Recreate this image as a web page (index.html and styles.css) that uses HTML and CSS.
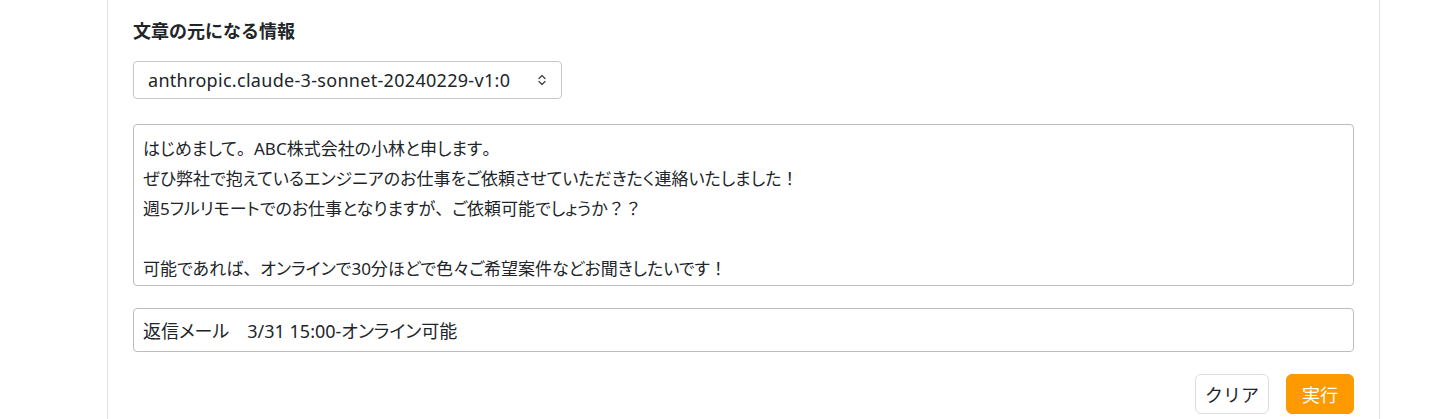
FILE: index.html
```html
<!DOCTYPE html>
<html lang="ja">
<head>
<meta charset="utf-8">
<link rel="stylesheet" href="styles.css">
</head>
<body>
<div class="page">
  <div class="card">
    <h2 class="title">文章の元になる情報</h2>
    <div class="select">
      <span class="select-text">anthropic.claude-3-sonnet-20240229-v1:0</span>
      <svg class="chev" width="10" height="16" viewBox="0 0 10 16" fill="none" stroke="#444" stroke-width="1.3" stroke-linecap="round" stroke-linejoin="round"><path d="M2 6.5 L5 3.5 L8 6.5"/><path d="M2 9.5 L5 12.5 L8 9.5"/></svg>
    </div>
    <div class="textarea">はじめまして<span class="fw">。</span>ABC株式会社の小林と申します<span class="fw">。</span><br>ぜひ弊社で抱えているエンジニアのお仕事をご依頼させていただきたく連絡いたしました<span class="fw">！</span><br>週5フルリモートでのお仕事となりますが<span class="fw">、</span>ご依頼可能でしょうか<span class="fw">？？</span><br><br>可能であれば<span class="fw">、</span>オンラインで30分ほどで色々ご希望案件などお聞きしたいです<span class="fw">！</span></div>
    <div class="input">返信メール　3/31 15:00-オンライン可能</div>
    <div class="actions">
      <button class="btn btn-clear">クリア</button>
      <button class="btn btn-run">実行</button>
    </div>
  </div>
</div>
</body>
</html>
```

FILE: styles.css
```css
html, body {
  margin: 0;
  padding: 0;
  background: #fff;
}
body {
  font-family: "Noto Sans", "Noto Sans CJK JP", sans-serif;
  color: #212529;
  font-size: 18px;
}
.page {
  padding: 0 60px 0 107px;
  width: 1273px;
}
.card {
  border-left: 1px solid #dee2e6;
  border-right: 1px solid #dee2e6;
  padding: 18px 25px 0 25px;
  display: flex;
  flex-direction: column;
  height: 419px;
  box-sizing: border-box;
}
.title {
  margin: 0;
  font-size: 18px;
  font-weight: 700;
  line-height: 26px;
  height: 26px;
}
.select {
  margin-top: 17px;
  width: 429px;
  height: 38px;
  box-sizing: border-box;
  border: 1px solid #c4c8cc;
  border-radius: 4px;
  display: flex;
  align-items: center;
  justify-content: space-between;
  padding: 0 14px 0 14px;
}
.select-text {
  font-size: 18px;
  letter-spacing: 0.3px;
}
.chev {
  display: block;
}
.textarea {
  font-size: 17px;
  font-feature-settings: "palt";
  margin-top: 25px;
  height: 162px;
  box-sizing: border-box;
  border: 1px solid #b9bdc1;
  border-radius: 4px;
  padding: 9px 9px;
  line-height: 30px;
}
.fw {
  font-feature-settings: normal;
}
.input {
  font-size: 18px;
  font-feature-settings: "palt";
  margin-top: 22px;
  height: 44px;
  box-sizing: border-box;
  border: 1px solid #b9bdc1;
  border-radius: 4px;
  padding: 0 9px;
  display: flex;
  align-items: center;
}
.actions {
  margin-top: 22px;
  display: flex;
  justify-content: flex-end;
  gap: 17px;
}
.btn {
  font-family: inherit;
  font-size: 18px;
  height: 40px;
  border-radius: 6px;
  padding: 0;
  cursor: pointer;
}
.btn-clear {
  background: #fff;
  border: 1px solid #dcdfe2;
  color: #212529;
  width: 74px;
}
.btn-run {
  background: #ff9900;
  border: 1px solid #ff9900;
  color: #fff;
  width: 68px;
}
```
